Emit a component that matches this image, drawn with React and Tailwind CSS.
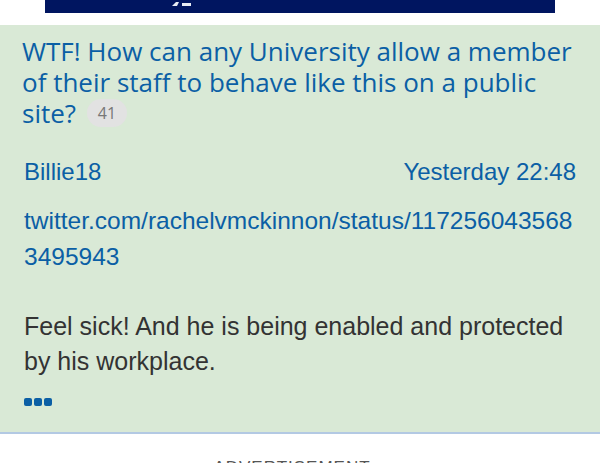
import React from 'react';

function Dots() {
  return (
    <div className="mt-[19px] flex gap-[2px]">
      <span className="block h-2 w-2 rounded-[2px] bg-[#0b5fa5]" />
      <span className="block h-2 w-2 rounded-[2px] bg-[#0b5fa5]" />
      <span className="block h-2 w-2 rounded-[2px] bg-[#0b5fa5]" />
    </div>
  );
}

export default function App() {
  return (
    <div className="h-[463px] w-[600px] overflow-hidden bg-white">
      <div className="relative mx-[45px] h-[13px] bg-[#001560]">
        <svg className="absolute left-[126px] top-0" width="22" height="7" viewBox="0 0 22 7">
          <path d="M1 6 L5 2 L8 2 L6 6 Z" fill="#e8ecf4" />
          <path d="M11 3 L20 3 L20 6 L11 6 Z" fill="#e8ecf4" />
        </svg>
      </div>
      <div className="h-[12px]" />
      <div className="border-b-2 border-[#b3c9e3] bg-[#d9e9d6] px-6 pb-[26px] pt-[11px]">
        <h1 className="-ml-[2px] text-[26px] leading-[31px] text-[#0b5fa5] [font-family:'Open_Sans',sans-serif]">
          WTF! How can any University allow a member of their staff to behave like this on a public site?{' '}
          <span className="relative -top-[3px] ml-[4px] inline-block rounded-full bg-[#e2e2e2] px-[11px] align-middle text-[16px] leading-[28px] text-[#777]">
            41
          </span>
        </h1>
        <div className="mt-6 flex justify-between text-[24px] leading-[36px] text-[#0b5fa5] [font-family:'Liberation_Sans',Arial,sans-serif]">
          <span>Billie18</span>
          <span>Yesterday 22:48</span>
        </div>
        <p className="mt-[13px] break-all text-[24.5px] leading-[36px] text-[#0b5fa5] [font-family:'Liberation_Sans',Arial,sans-serif]">
          twitter.com/rachelvmckinnon/status/1172560435683495943
        </p>
        <p className="mt-[34px] text-[25px] leading-[35px] text-[#333] [font-family:'Liberation_Sans',Arial,sans-serif]">
          Feel sick! And he is being enabled and protected by his workplace.
        </p>
        <Dots />
      </div>
      <div className="pr-4 pt-[21px] text-center text-[17px] tracking-[1px] text-[#555] [font-family:'Liberation_Sans',Arial,sans-serif]">
        ADVERTISEMENT
      </div>
    </div>
  );
}
